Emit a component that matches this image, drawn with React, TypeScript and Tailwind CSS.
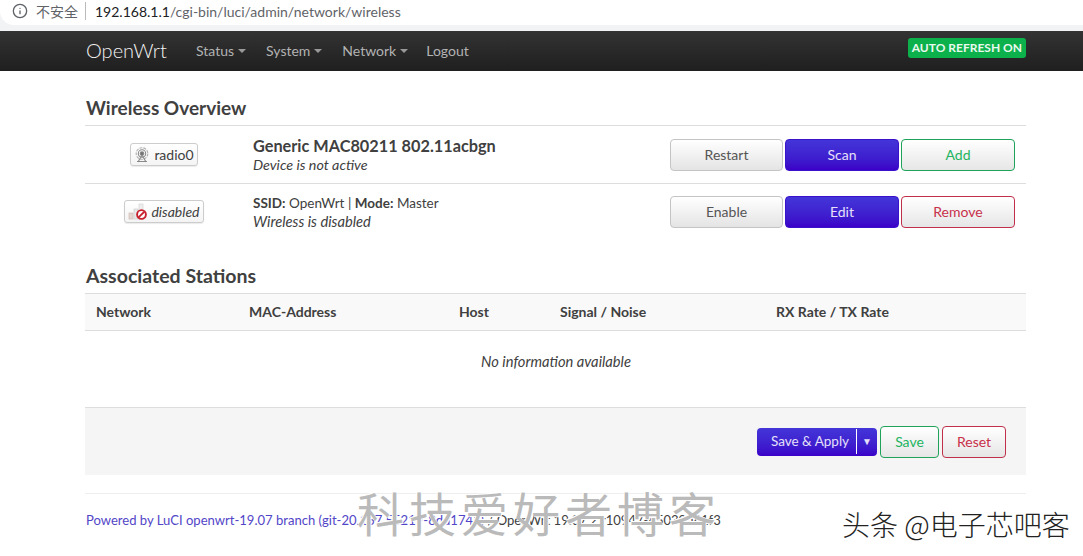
import { Info } from "lucide-react";

const font = "font-['Lato','Liberation_Sans',sans-serif]";

function RadioIcon() {
  return (
    <svg width="16" height="16" viewBox="0 0 16 16" fill="none" stroke="#8a8a8a" strokeWidth="1.1">
      <circle cx="8" cy="6.5" r="1.8" fill="#6f6f6f" />
      <circle cx="8" cy="6.5" r="3.7" />
      <circle cx="8" cy="6.5" r="5.8" stroke="#b0b0b0" strokeDasharray="3 1" />
      <path d="M8 8 4 15M8 8l4 7M3 14.5h10" stroke="#8a8a8a" />
    </svg>
  );
}

function DisabledIcon() {
  return (
    <svg width="20" height="18" viewBox="0 0 20 18" fill="none">
      <rect x="1" y="11" width="4" height="6" fill="#e6d6d0" stroke="#c9b5ad" strokeWidth="0.6" />
      <rect x="6" y="7" width="4" height="10" fill="#e8e8e8" stroke="#c9c9c9" strokeWidth="0.6" />
      <rect x="11" y="2" width="4" height="15" fill="#eeeeee" stroke="#d0d0d0" strokeWidth="0.6" />
      <circle cx="13.5" cy="12.5" r="4.4" fill="#fff" stroke="#c8202c" strokeWidth="1.9" />
      <path d="M10.6 15.4 16.4 9.6" stroke="#c8202c" strokeWidth="1.9" />
    </svg>
  );
}

function Btn({ label, tone, w }: { label: string; tone: "plain" | "primary" | "add" | "remove"; w: string }) {
  const tones = {
    plain: "border-[#c4c4c4] text-[#555] bg-gradient-to-b from-white to-[#e4e4e4]",
    primary: "border-[#3a12cc] text-[#e6e0fa] bg-gradient-to-b from-[#4335d8] to-[#3b00c8]",
    add: "border-[#1fa35a] text-[#22b45f] bg-gradient-to-b from-white to-[#e6e6e6]",
    remove: "border-[#c0304a] text-[#c8304a] bg-gradient-to-b from-white to-[#e6e6e6]",
  };
  return (
    <button className={`${w} h-8 rounded-[4px] border text-[14px] ${tones[tone]}`}>{label}</button>
  );
}

function Row({
  h,
  badge,
  info,
  actions,
}: {
  h: string;
  badge: React.ReactNode;
  info: React.ReactNode;
  actions: React.ReactNode;
}) {
  return (
    <div className={`flex ${h} items-center border-t border-[#dddddd]`}>
      <div className="flex w-[158px] flex-none justify-center">{badge}</div>
      <div className="ml-[10px] w-[417px] flex-none">{info}</div>
      <div className="flex flex-none gap-[2px]">{actions}</div>
    </div>
  );
}

export default function App() {
  return (
    <div className={`relative h-[556px] w-[1083px] overflow-hidden bg-white text-[#404040] ${font}`}>
      {/* browser address bar */}
      <div className="h-[31px] bg-[#f1f3f4]">
        <div className="flex h-[25px] items-center rounded-bl-[14px] bg-white pb-[3px] pl-[12px] text-[14px]">
          <Info size={16} className="text-[#5f6368]" />
          <span className="ml-[8px] font-['Noto_Sans_CJK_SC',sans-serif] text-[#5f6368]">不安全</span>
          <span className="ml-[7px] h-[18px] w-px bg-[#bbbbbb]" />
          <span className="ml-[9px] text-[#202124]">
            192.168.1.1<span className="text-[#5f6368]">/cgi-bin/luci/admin/network/wireless</span>
          </span>
        </div>
      </div>

      {/* navbar */}
      <div className="flex h-[40px] items-center bg-gradient-to-b from-[#333333] to-[#1f1f1f] pl-[86px] pr-[57px]">
        <span className="mb-[3px] w-[110px] text-[20px] font-light text-[#f2f2f2]">OpenWrt</span>
        <nav className="mb-[2px] flex gap-[20px] text-[14px] text-[#b3b3b3]">
          {["Status", "System", "Network"].map((n) => (
            <span key={n} className="flex items-center gap-[4px]">
              {n}
              <span className="mt-[2px] border-x-[4px] border-t-[4px] border-x-transparent border-t-[#999]" />
            </span>
          ))}
          <span className="-ml-[2px]">Logout</span>
        </nav>
        <span className="mb-[6px] ml-auto rounded-[3px] bg-[#0cb14b] px-[4px] text-[12px] leading-[20px] font-bold text-[#eaf9ef]">
          AUTO REFRESH ON
        </span>
      </div>

      <main className="pr-[57px] pl-[85px]">
        <h2 className="mt-[24px] mb-[5px] ml-px h-[25px] text-[19px] leading-[25px] font-bold text-[#404040]">
          Wireless Overview
        </h2>
        <Row
          h="h-[58px]"
          badge={
            <span className="flex h-[23px] items-center gap-[4px] rounded-[3px] border border-[#cccccc] bg-gradient-to-b from-white to-[#f4f4f4] px-[3px] text-[14px] shadow-[0_1px_1px_rgba(0,0,0,0.08)]">
              <RadioIcon />
              radio0
            </span>
          }
          info={
            <div>
              <div className="text-[16.3px] leading-[20px] font-bold">Generic MAC80211 802.11acbgn</div>
              <div className="text-[14.3px] leading-[18px] italic">Device is not active</div>
            </div>
          }
          actions={
            <>
              <Btn label="Restart" tone="plain" w="w-[113px]" />
              <Btn label="Scan" tone="primary" w="w-[114px]" />
              <Btn label="Add" tone="add" w="w-[114px]" />
            </>
          }
        />
        <Row
          h="h-[56px]"
          badge={
            <span className="mb-px flex h-[23px] items-center gap-[3px] rounded-[3px] border border-[#cccccc] bg-gradient-to-b from-white to-[#f4f4f4] px-[3px] text-[14px] italic shadow-[0_1px_1px_rgba(0,0,0,0.08)]">
              <DisabledIcon />
              disabled
            </span>
          }
          info={
            <div className="text-[13.5px] leading-[18px]">
              <div>
                <b>SSID:</b> OpenWrt | <b>Mode:</b> Master
              </div>
              <div className="text-[14.7px] italic">Wireless is disabled</div>
            </div>
          }
          actions={
            <>
              <Btn label="Enable" tone="plain" w="w-[113px]" />
              <Btn label="Edit" tone="primary" w="w-[114px]" />
              <Btn label="Remove" tone="remove" w="w-[114px]" />
            </>
          }
        />

        <h2 className="mt-[24px] mb-[5px] ml-px h-[25px] text-[19.5px] leading-[25px] font-bold">Associated Stations</h2>
        <div className="grid h-[38px] grid-cols-[153px_210px_101px_216px_1fr] items-center border-y border-[#dddddd] bg-[#f9f9f9] pb-[2px] pl-[11px] text-[14px] font-bold">
          <span>Network</span>
          <span>MAC-Address</span>
          <span>Host</span>
          <span>Signal / Noise</span>
          <span>RX Rate / TX Rate</span>
        </div>
        <div className="flex h-[60px] items-center justify-center pl-[1px] text-[14.7px] italic">No information available</div>

        <div className="mt-[16px] flex h-[68px] items-center justify-end gap-[3px] border-t border-[#dddddd] bg-[#f5f5f5] pr-[20px]">
          <div className="flex h-[28px] w-[120px] items-center rounded-[4px] bg-gradient-to-b from-[#4335d8] to-[#3b00c8] text-[13.5px] text-[#e6e0fa]">
            <span className="w-[100px] border-r border-white pl-[7px] text-center leading-[25px]">Save &amp; Apply</span>
            <span className="flex-1 text-center text-[10px]">▼</span>
          </div>
          <button className="h-[32px] w-[59px] rounded-[4px] border border-[#1fa35a] bg-gradient-to-b from-white to-[#e6e6e6] text-[14px] text-[#22b45f]">
            Save
          </button>
          <button className="h-[32px] w-[64px] rounded-[4px] border border-[#c0304a] bg-gradient-to-b from-white to-[#e6e6e6] text-[14px] text-[#c8304a]">
            Reset
          </button>
        </div>

        <footer className="mt-[18px] border-t border-[#eeeeee] pt-[16px] pl-px text-[13.05px] leading-[20px] whitespace-nowrap">
          <span className="text-[#5246c8]">Powered by LuCI openwrt-19.07 branch (git-20.157.55219-8dd1741)</span>
          <span> / OpenWrt 19.07.2 r10947-65030d81f3</span>
        </footer>
      </main>

      {/* watermarks burned into the screenshot */}
      <span className="absolute top-[482px] left-[357px] font-['Noto_Sans_CJK_SC',sans-serif] text-[47px] leading-[60px] tracking-[5px] whitespace-nowrap text-[#bababa] [text-shadow:1px_1px_0_#fff,-1px_-1px_0_#fff]">
        科技爱好者博客
      </span>
      <span className="absolute top-[504px] left-[842px] font-['Noto_Sans_CJK_SC',sans-serif] text-[28px] leading-[40px] font-light whitespace-nowrap text-[#222]">
        头条 @电子芯吧客
      </span>
    </div>
  );
}
